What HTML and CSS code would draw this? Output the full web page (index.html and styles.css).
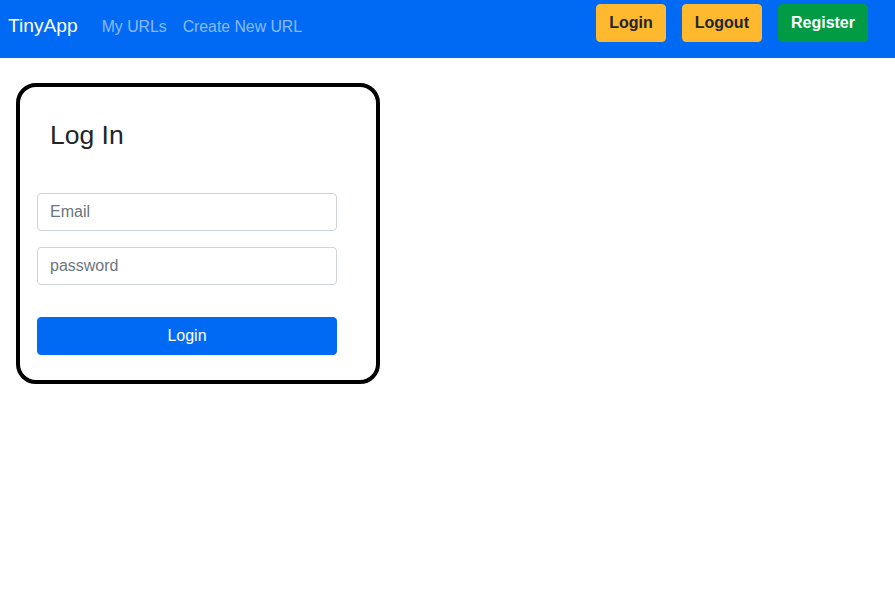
FILE: index.html
```html
<!DOCTYPE html>
<html lang="en">
<head>
<meta charset="utf-8">
<title>TinyApp</title>
<link rel="stylesheet" href="styles.css">
</head>
<body>
<nav class="navbar">
  <div class="nav-left">
    <a class="brand" href="#">TinyApp</a>
    <a class="nav-link" href="#">My URLs</a>
    <a class="nav-link" href="#">Create New URL</a>
  </div>
  <div class="nav-right">
    <button class="btn btn-warning">Login</button>
    <button class="btn btn-warning">Logout</button>
    <button class="btn btn-success">Register</button>
  </div>
</nav>
<main class="card">
  <h3 class="card-title">Log In</h3>
  <form class="login-form">
    <input class="form-control" type="email" placeholder="Email">
    <input class="form-control" type="password" placeholder="password">
    <button class="btn btn-primary" type="button">Login</button>
  </form>
</main>
</body>
</html>
```
FILE: styles.css
```css
* { box-sizing: border-box; }
body {
  margin: 0;
  font-family: "Liberation Sans", Arial, sans-serif;
  font-size: 16px;
  color: #212529;
  background: #fff;
}
.navbar {
  height: 58px;
  background: #006af5;
  display: flex;
  justify-content: space-between;
  align-items: flex-start;
}
.nav-left {
  display: flex;
  align-items: baseline;
  padding: 11px 0 0 8px;
}
.brand {
  font-size: 19.2px;
  line-height: 30px;
  color: #fff;
  text-decoration: none;
  margin-right: 16px;
}
.nav-link {
  font-size: 15.8px;
  line-height: 24px;
  color: rgba(255, 255, 255, 0.55);
  text-decoration: none;
  padding: 0 8px;
}
.nav-right {
  display: flex;
  gap: 16px;
  padding-top: 4px;
  margin-right: 27px;
}
.btn {
  font-family: inherit;
  font-size: 16px;
  line-height: 24px;
  height: 38px;
  padding: 6px 12px;
  border: 1px solid transparent;
  border-radius: 4px;
  cursor: pointer;
}
.btn-warning {
  background: #ffb92f;
  border-color: #ffb92f;
  color: #212529;
  font-weight: bold;
}
.btn-success {
  background: #009b44;
  border-color: #009b44;
  color: #fff;
  font-weight: bold;
}
.card {
  display: block;
  width: 364px;
  margin: 25px 0 0 16px;
  border: 4px solid #000;
  border-radius: 20px;
  padding: 31px 17px 25px 17px;
}
.card-title {
  margin: 0 0 41px 13px;
  font-size: 26.5px;
  font-weight: 500;
  line-height: 34px;
}
.login-form {
  display: flex;
  flex-direction: column;
  width: 300px;
}
.form-control {
  height: 38px;
  padding: 6px 12px;
  font-family: inherit;
  font-size: 16px;
  border: 1px solid #ced4da;
  border-radius: 4px;
  color: #495057;
  margin-bottom: 16px;
}
.form-control::placeholder { color: #6c757d; }
.login-form .form-control:nth-of-type(2) { margin-bottom: 32px; }
.btn-primary {
  width: 300px;
  background: #006af5;
  border-color: #006af5;
  color: #fff;
}
```
